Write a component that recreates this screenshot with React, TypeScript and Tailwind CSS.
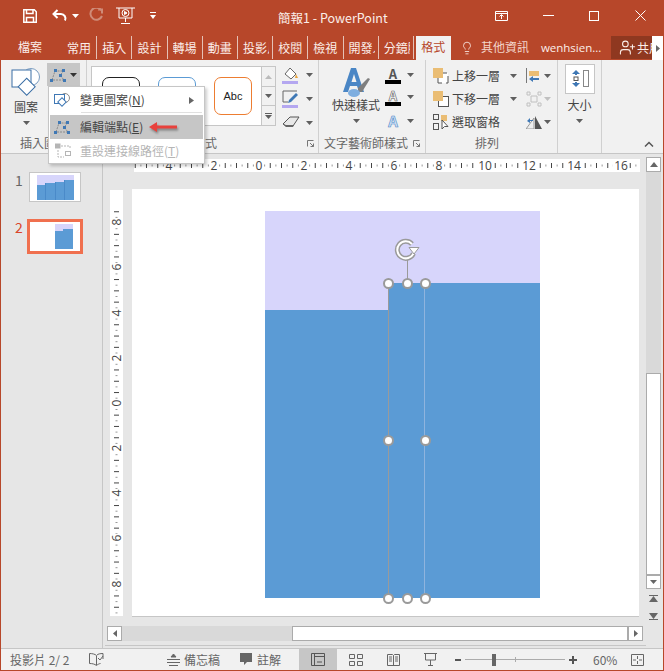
import { Lightbulb, UserPlus } from 'lucide-react';

const FONT = '"Noto Sans CJK TC", "Open Sans", sans-serif';

const tabs = ['常用', '插入', '設計', '轉場', '動畫', '投影片放映', '校閱', '檢視', '開發人員', '分鏡腳本'];

const hRulerLabels = [
  { x: 35, t: '4' }, { x: 80, t: '2' }, { x: 125, t: '0' }, { x: 170, t: '2' }, { x: 215, t: '4' }, { x: 260, t: '6' },
  { x: 305, t: '8' }, { x: 351, t: '10' }, { x: 395, t: '12' }, { x: 440, t: '14' }, { x: 487, t: '16' },
];
const vRulerLabels = [
  { y: 32, t: '8' }, { y: 77, t: '6' }, { y: 123, t: '4' }, { y: 168, t: '2' }, { y: 213, t: '0' },
  { y: 258, t: '2' }, { y: 303, t: '4' }, { y: 348, t: '6' }, { y: 394, t: '8' },
];

function Caret({ color = '#5f5f5f', className = '' }: { color?: string; className?: string }) {
  return (
    <svg width="7" height="4" viewBox="0 0 7 4" className={`shrink-0 ${className}`}>
      <path d="M0 0h7L3.5 4z" fill={color} />
    </svg>
  );
}

function EditPointsIcon() {
  return (
    <svg width="17" height="16" viewBox="0 0 17 16">
      <path d="M2 13L5 4h8M14 4L10 8l4 5H2" fill="none" stroke="#8a8a8a" strokeDasharray="2 1" />
      <g fill="#3f78b5">
        <rect x="0" y="12" width="3" height="3" />
        <rect x="4" y="2" width="3" height="3" />
        <rect x="12" y="2" width="3" height="3" />
        <rect x="9" y="7" width="3" height="3" />
        <rect x="13" y="12" width="3" height="3" />
      </g>
    </svg>
  );
}

function AbcCard({ border }: { border: string }) {
  return (
    <div className={`flex h-[38px] w-[38px] items-center justify-center rounded-[7px] border bg-white text-[11px] text-[#222] ${border}`} style={{ fontFamily: '"Liberation Sans", sans-serif' }}>
      Abc
    </div>
  );
}

function Handle({ x, y }: { x: number; y: number }) {
  return (
    <span
      className="absolute h-[11px] w-[11px] rounded-full border-2 border-[#9a9a9a] bg-white"
      style={{ left: x - 5.5, top: y - 5.5 }}
    />
  );
}

function HRuler() {
  const ticks = [];
  for (let i = 0; i < 90; i++) {
    const x = 125 - 45 * 2 - 33.75 + (i * 45) / 8;
    const kind = i % 2 === 0 ? 5 : 2;
    ticks.push(<line key={i} x1={x} x2={x} y1={6.5 - kind / 2} y2={6.5 + kind / 2} stroke={kind === 2 ? '#999' : '#444'} />);
  }
  return (
    <svg width="506" height="13" className="bg-white">
      {ticks}
      {hRulerLabels.map((l) => (
        <g key={l.x}>
          <rect x={l.x - (l.t.length > 1 ? 8 : 4)} y="0" width={l.t.length > 1 ? 16 : 8} height="13" fill="#fff" />
          <text x={l.x} y="11" textAnchor="middle" fontSize="12" fill="#444" fontFamily="Open Sans">{l.t}</text>
        </g>
      ))}
    </svg>
  );
}

function VRuler() {
  const ticks = [];
  for (let i = 0; i < 76; i++) {
    const y = 213 - 191.25 + (i * 45.2) / 8;
    const k = i % 2 === 0 ? 5 : 2;
    ticks.push(<line key={i} y1={y} y2={y} x1={6.5 - k / 2} x2={6.5 + k / 2} stroke={k === 2 ? '#999' : '#444'} />);
  }
  return (
    <svg width="13" height="426" className="shrink-0 bg-white">
      {ticks}
      {vRulerLabels.map((l) => (
        <g key={l.y}>
          <rect x="0" y={l.y - 4} width="13" height="8" fill="#fff" />
          <text x="6.5" y={l.y} textAnchor="middle" dominantBaseline="central" fontSize="12" fill="#444" fontFamily="Open Sans" transform={`rotate(-90 6.5 ${l.y})`}>{l.t}</text>
        </g>
      ))}
    </svg>
  );
}

export default function App() {
  return (
    <div className="relative flex h-[671px] w-[664px] flex-col overflow-hidden border-x border-b border-[#b7472a] bg-[#e6e6e6] text-[12px] text-[#444]" style={{ fontFamily: FONT }}>
      {/* title bar */}
      <div className="flex h-[34px] shrink-0 items-center bg-[#b7472a] pb-[3px] pl-[22px] text-white">
        <svg width="14" height="14" viewBox="0 0 14 14" fill="none" stroke="#fff" strokeWidth="1.5">
          <path d="M.8.8h10.500l2 2v10.400H.8z" />
          <path d="M3.500 1v3.500h6.500V1M3.500 13V8.500h7V13" />
        </svg>
        <svg width="16" height="14" viewBox="0 0 16 14" fill="none" stroke="#fff" strokeWidth="2" className="ml-[15px]">
          <path d="M5.500 1L1.500 5l4 4M2 5h7a4.500 4.500 0 0 1 4 6.500" />
        </svg>
        <Caret color="#fff" className="ml-[4px]" />
        <svg width="14" height="15" viewBox="0 0 14 15" fill="none" stroke="#cf8b78" strokeWidth="2" className="ml-[10px]">
          <path d="M9 1.500h4v4M12.500 2.500A6 6 0 1 0 13 8" />
        </svg>
        <svg width="19" height="18" viewBox="0 0 19 18" fill="none" stroke="#fff" className="ml-[13px]">
          <path d="M0 1h19M3 1v10h13V1M9.500 11v4M5 16.500h9" />
          <circle cx="9.500" cy="6" r="3.500" />
          <path d="M8.500 4.500v3l2.500-1.500z" fill="#fff" />
        </svg>
        <svg width="6" height="7" viewBox="0 0 6 7" fill="#fff" className="ml-[15px]">
          <path d="M0 0h6v1H0zM0 3h6L3 7z" />
        </svg>
        <span className="ml-[122px] mt-[5px] w-[217px] text-[12.5px] leading-none text-[#fbeee9]">簡報1 - PowerPoint</span>
        <svg width="13" height="10" viewBox="0 0 13 10" fill="none" stroke="#fff">
          <path d="M.5.500h12v9H.5zM.5 2.500h12M6.500 8V4M4.500 5.500l2-2 2 2" />
        </svg>
        <span className="ml-[35px] h-px w-[11px] bg-white" />
        <span className="ml-[35px] h-[10px] w-[10px] border border-white" />
        <svg width="11" height="11" viewBox="0 0 11 11" stroke="#fff" className="ml-[36px]">
          <path d="M.500.500l10 10M10.500.500l-10 10" />
        </svg>
      </div>

      {/* tabs */}
      <div className="flex h-[26px] shrink-0 items-end whitespace-nowrap bg-[#b7472a] text-[#fbeee9]">
        <span className="mb-[4px] w-[61px] shrink-0 pl-[17px]">檔案</span>
        <div className="mb-[1px] flex h-[23px] items-center">
          {tabs.map((t) => (
            <span key={t} className="flex h-full w-[35.2px] items-center border-r border-[#e5c1b6] pl-[5px]">
              <span className="w-[26px] overflow-hidden">{t}</span>
            </span>
          ))}
        </div>
        <span className="ml-[2px] flex h-[24px] w-[35px] shrink-0 items-center justify-center bg-[#f1f1f1] pb-[2px] text-[#b7472a]">格式</span>
        <Lightbulb size={14} strokeWidth={1.4} className="mb-[5px] ml-[9px] shrink-0" />
        <span className="mb-[4px] ml-[7px] text-[#f3d5cb]">其他資訊</span>
        <span className="mb-[4px] ml-[12px] w-[72px] text-[11.5px]" style={{ fontFamily: '"Open Sans", sans-serif' }}>wenhsien...</span>
        <div className="mb-[1px] flex h-[23px] w-[41px] shrink-0 items-center gap-[1px] overflow-hidden bg-[#8f3820] pl-[8px]">
          <UserPlus size={17} strokeWidth={1.5} className="shrink-0" />
          <span>共用</span>
        </div>
        <div className="flex h-[24px] w-[11px] shrink-0 items-center justify-center bg-white">
          <svg width="4" height="7" viewBox="0 0 4 7"><path d="M0 0l4 3.500L0 7z" fill="#666" /></svg>
        </div>
      </div>

      {/* ribbon */}
      <div className="flex h-[94px] shrink-0 border-b border-[#c6c6c6] bg-[#f1f1f1] text-[#444]">
        <div className="flex w-[86px] shrink-0 flex-col border-r border-[#d0d0d0]">
          <div className="flex h-[74px] pl-[5px] pt-[3px]">
            <div className="flex w-[40px] flex-col items-center pt-[4px]">
              <svg width="30" height="31" viewBox="0 0 30 31" fill="none" stroke="#3a6ea5">
                <circle cx="20" cy="10" r="8.500" stroke="#7a9cc0" fill="#fff" />
                <rect x="1" y="3" width="19" height="17" fill="#fff" />
                <rect x="10" y="13" width="12" height="12" transform="rotate(45 15 19)" fill="#fff" />
              </svg>
              <span className="mt-[1px] leading-[16px]">圖案</span>
              <Caret className="mt-[6px]" />
            </div>
            <div className="ml-[1px] flex h-[23px] w-[33px] items-center justify-center gap-[3px] bg-[#c6c6c6]">
              <EditPointsIcon />
              <Caret color="#333" />
            </div>
          </div>
          <span className="pl-[19px] text-[#666]">插入圖案</span>
        </div>

        <div className="flex w-[232px] shrink-0 flex-col border-r border-[#d0d0d0]">
          <div className="flex h-[74px] pl-[4px] pt-[6px]">
            <div className="flex h-[60px] w-[185px] border border-[#c6c6c6] bg-white">
              <div className="flex flex-1 items-center gap-[18px] pl-[10px]">
                <AbcCard border="border-[#222]" />
                <AbcCard border="border-[#5b9bd5]" />
                <AbcCard border="border-[#ed7d31]" />
              </div>
              <div className="flex w-[14px] flex-col border-l border-[#c6c6c6] bg-[#f1f1f1]">
                <div className="flex h-[20px] items-center justify-center border-b border-[#c6c6c6]">
                  <svg width="7" height="4" viewBox="0 0 7 4"><path d="M0 4h7L3.500 0z" fill="#bbb" /></svg>
                </div>
                <div className="flex h-[19px] items-center justify-center border-b border-[#c6c6c6]"><Caret /></div>
                <div className="flex flex-1 flex-col items-center justify-center gap-[1px]">
                  <span className="h-px w-[7px] bg-[#5f5f5f]" />
                  <Caret />
                </div>
              </div>
            </div>
            <div className="ml-[6px] mt-[-1px] flex flex-col gap-[5px]">
              <div className="flex h-[19px] items-center gap-[6px]">
                <svg width="18" height="18" viewBox="0 0 18 18">
                  <path d="M8 2l6 6-5 5-6-5z" fill="#fff" stroke="#666" />
                  <path d="M14 8l2 4h-3z" fill="#e8a33c" />
                  <rect x="0" y="15" width="16" height="3" fill="#b4a7f0" />
                </svg>
                <Caret />
              </div>
              <div className="flex h-[19px] items-center gap-[6px]">
                <svg width="18" height="18" viewBox="0 0 18 18" fill="none">
                  <path d="M15 1H1v11h5" stroke="#666" />
                  <path d="M7 10l7-7 2 2-7 7-3 1z" fill="#3f78b5" />
                  <rect x="0" y="15" width="16" height="3" fill="#b4a7f0" />
                </svg>
                <Caret />
              </div>
              <div className="flex h-[19px] items-center gap-[6px]">
                <svg width="18" height="16" viewBox="0 0 18 16">
                  <path d="M1 9l7-7h9l-6 9H4z" fill="#e8e8e8" stroke="#555" />
                  <path d="M1 9l3 3h7l1-2H4z" fill="#666" />
                </svg>
                <Caret />
              </div>
            </div>
          </div>
          <div className="flex items-center">
            <span className="ml-[82px] flex-1 text-[#666]">圖案樣式</span>
            <svg width="7" height="7" viewBox="0 0 7 7" fill="none" stroke="#777" className="mr-[4px]"><path d="M.5 6.500V.5h6M3 3l3.500 3.500M6.500 3.500v3h-3" /></svg>
          </div>
        </div>

        <div className="flex w-[107px] shrink-0 flex-col border-r border-[#d0d0d0]">
          <div className="flex h-[74px] pt-[6px]">
            <div className="flex w-[66px] shrink-0 flex-col items-center pl-[8px]">
              <svg width="30" height="32" viewBox="0 0 30 32">
                <path d="M2 26L10 2h5l8 24h-5l-2-6H9l-2 6zM10.500 16h5L13 8z" fill="#4a86c5" />
                <path d="M17 22l10-10 2 1-8 13-4 0z" fill="#7f7f7f" />
                <ellipse cx="13" cy="27" rx="6" ry="4" fill="#7eaee0" />
              </svg>
              <span className="mt-[-1px] whitespace-nowrap leading-[16px]">快速樣式</span>
              <Caret className="mt-[6px]" />
            </div>
            <div className="flex flex-col gap-[2px] pt-[1px]">
              <div className="flex h-[20px] items-start gap-[6px]">
                <div className="flex w-[16px] flex-col items-center leading-[13px]">
                  <span className="text-[13px] font-bold text-[#555]">A</span>
                  <span className="h-[4px] w-[16px] bg-black" />
                </div>
                <Caret className="mt-[6px]" />
              </div>
              <div className="flex h-[20px] items-start gap-[6px]">
                <div className="flex w-[16px] flex-col items-center leading-[13px]">
                  <span className="text-[13px] font-bold text-white [-webkit-text-stroke:0.6px_#555]">A</span>
                  <span className="h-[4px] w-[16px] bg-black" />
                </div>
                <Caret className="mt-[6px]" />
              </div>
              <div className="flex h-[20px] items-center gap-[6px]">
                <span className="w-[16px] text-center text-[15px] font-bold text-[#cfe2f6] [-webkit-text-stroke:0.6px_#4a86c5]">A</span>
                <Caret />
              </div>
            </div>
          </div>
          <div className="flex items-center">
            <span className="flex-1 whitespace-nowrap pl-[5px] text-[#666]">文字藝術師樣式</span>
            <svg width="7" height="7" viewBox="0 0 7 7" fill="none" stroke="#777" className="mr-[5px]"><path d="M.5 6.500V.5h6M3 3l3.500 3.500M6.500 3.500v3h-3" /></svg>
          </div>
        </div>

        <div className="flex w-[132px] shrink-0 flex-col border-r border-[#d0d0d0]">
          <div className="flex h-[74px] pl-[7px] pt-[4px]">
            <div className="flex w-[93px] shrink-0 flex-col">
              {['上移一層', '下移一層', '選取窗格'].map((t, i) => (
                <div key={t} className="flex h-[23px] items-center">
                  <svg width="16" height="16" viewBox="0 0 16 16" className="shrink-0">
                    {i === 0 && <path d="M5 5h10v10H5z" fill="#fff" stroke="#555" strokeDasharray="9 4" />}
                    {i === 1 && <rect x="5.500" y="5.500" width="10" height="10" fill="#fff" stroke="#555" />}
                    {i < 2 && <rect x="0" y="0" width="10" height="10" fill="#eabd74" />}
                    {i === 2 && (
                      <g fill="none" stroke="#555">
                        <rect x=".5" y=".5" width="5" height="5" />
                        <rect x=".5" y="9.500" width="5" height="6" />
                        <rect x="8" y="1" width="6" height="6" fill="#eabd74" stroke="none" />
                        <path d="M9 6v9l2.500-2.500H15z" fill="#fff" />
                      </g>
                    )}
                  </svg>
                  <span className="ml-[3px] whitespace-nowrap">{t}</span>
                  {i < 2 && <Caret className="ml-[10px]" />}
                </div>
              ))}
            </div>
            <div className="flex flex-col">
              <div className="flex h-[23px] items-center gap-[3px]">
                <svg width="15" height="16" viewBox="0 0 15 16">
                  <path d="M.5 0v15" stroke="#777" />
                  <rect x="3" y="3" width="10" height="5" fill="#eabd74" />
                  <path d="M3 11l4-3v2h6v2H7v2z" fill="#3f78b5" />
                </svg>
                <Caret />
              </div>
              <div className="flex h-[23px] items-center gap-[2px]">
                <svg width="16" height="16" viewBox="0 0 16 16" fill="none" stroke="#c0c0c0">
                  <path d="M1 1h3v3H1zM12 1h3v3h-3zM1 12h3v3H1zM12 12h3v3h-3zM5 5h6v6H5z" />
                </svg>
                <Caret color="#c0c0c0" />
              </div>
              <div className="flex h-[23px] items-center gap-[2px]">
                <svg width="16" height="14" viewBox="0 0 16 14">
                  <path d="M8 3v11H0z" fill="#eee" stroke="#999" />
                  <path d="M9 1l7 13H9z" fill="#555" />
                  <path d="M1 6l3-3v2h3v1H4v2z" fill="#3f78b5" />
                </svg>
                <Caret />
              </div>
            </div>
          </div>
          <span className="pl-[49px] text-[#666]">排列</span>
        </div>

        <div className="flex w-[44px] shrink-0 flex-col border-r border-[#d0d0d0]">
          <div className="flex h-[74px] flex-col items-center pt-[4px]">
            <div className="flex h-[30px] w-[30px] items-center justify-center border border-[#c6c6c6] bg-white">
              <svg width="18" height="18" viewBox="0 0 18 18">
                <rect x="12.500" y=".5" width="5" height="16" fill="none" stroke="#888" />
                <rect x="3" y="7" width="4" height="3.500" fill="none" stroke="#555" />
                <path d="M1 4l4-4 4 4H6v1H4V4zM1 13l4 4 4-4H6v-1H4v1z" fill="#3f78b5" />
              </svg>
            </div>
            <span className="mt-[3px] leading-[16px]">大小</span>
            <Caret className="mt-[6px]" />
          </div>
        </div>

        <div className="flex flex-1 items-end justify-end pb-[6px] pr-[9px]">
          <svg width="10" height="6" viewBox="0 0 10 6" fill="none" stroke="#555" strokeWidth="1.5"><path d="M1 5.500l4-4 4 4" /></svg>
        </div>
      </div>

      {/* work area */}
      <div className="flex min-h-0 flex-1">
        <div className="flex w-[102px] shrink-0 flex-col border-r border-[#c6c6c6] pt-[18px]">
          <div className="flex items-start pl-[14px]">
            <span className="w-[14px] text-[14px] leading-[16px] text-[#666]">1</span>
            <div className="flex h-[30px] w-[52px] justify-center border border-[#c6c6c6] bg-white pt-[2px]">
              <div className="flex h-[25px] w-[37px] items-end bg-[#d7d5fb]">
                <span className="h-[15px] flex-1 bg-[#5b9bd5]" />
                <span className="h-[17px] flex-1 border-l border-[#4a8ac9] bg-[#5b9bd5]" />
                <span className="h-[18px] flex-1 border-l border-[#4a8ac9] bg-[#5b9bd5]" />
                <span className="h-[20px] flex-1 border-l border-[#4a8ac9] bg-[#5b9bd5]" />
              </div>
            </div>
          </div>
          <div className="mt-[17px] flex items-start pl-[14px]">
            <span className="w-[12px] text-[14px] leading-[16px] text-[#d9452a]">2</span>
            <div className="flex h-[35px] w-[56px] justify-end border-[3px] border-[#f0704f] bg-white pr-[7px] pt-[2px]">
              <div className="flex h-[25px] w-[18px] items-end bg-[#d7d5fb]">
                <span className="h-[18px] w-[8px] bg-[#5b9bd5]" />
                <span className="h-[20px] w-[10px] bg-[#5b9bd5]" />
              </div>
            </div>
          </div>
        </div>

        <div className="flex w-[543px] shrink-0 flex-col">
          <div className="ml-[31px] mt-[5px] leading-[0]"><HRuler /></div>
          <div className="mt-[17px] flex">
            <div className="ml-[7px] mt-px"><VRuler /></div>
            <div className="relative ml-[9px] h-[428px] w-[507px] border-b border-[#c6c6c6] bg-white">
              <div className="absolute left-[133px] top-[22px] h-[387px] w-[275px] bg-[#d7d5fb]" />
              <div className="absolute left-[133px] top-[121px] h-[288px] w-[123px] bg-[#5b9bd5]" />
              <div className="absolute left-[256px] top-[94px] h-[315px] w-[152px] bg-[#5b9bd5]" />
              <div className="absolute left-[256px] top-[94px] h-[315px] w-[37px] border-x border-l-[#9a9a9a] border-r-[#8fb4de]" />
              <span className="absolute left-[275px] top-[69px] h-[25px] w-px bg-[#9a9a9a]" />
              <svg width="30" height="26" viewBox="0 0 30 26" fill="none" className="absolute left-[262px] top-[49px]">
                <path d="M19.500 15.500a8.500 8.500 0 1 1-1.500-9.500" stroke="#9a9a9a" strokeWidth="5" />
                <path d="M19.500 15.500a8.500 8.500 0 1 1-1.500-9.500" stroke="#fff" strokeWidth="2" />
                <path d="M15 9.500h10l-5 6.500z" fill="#fff" stroke="#9a9a9a" />
              </svg>
              <Handle x={256} y={94} />
              <Handle x={275} y={94} />
              <Handle x={293} y={94} />
              <Handle x={256} y={251} />
              <Handle x={293} y={251} />
              <Handle x={256} y={409} />
              <Handle x={275} y={409} />
              <Handle x={293} y={409} />
            </div>
          </div>
          <div className="ml-[4px] mt-[9px] flex h-[15px] w-[536px] bg-[#d9d9d9]">
            <div className="flex w-[15px] items-center justify-center border border-[#ababab] bg-white">
              <svg width="4" height="7" viewBox="0 0 4 7"><path d="M4 0L0 3.500 4 7z" fill="#666" /></svg>
            </div>
            <div className="ml-[170px] w-[336px] border border-[#ababab] bg-white" />
            <div className="flex w-[15px] items-center justify-center border border-[#ababab] bg-white">
              <svg width="4" height="7" viewBox="0 0 4 7"><path d="M0 0l4 3.500L0 7z" fill="#666" /></svg>
            </div>
          </div>
          <div className="ml-[2px] mt-[4px] h-px bg-[#c6c6c6]" />
        </div>

        <div className="flex w-[15px] shrink-0 flex-col pt-[3px]">
          <div className="flex h-[15px] items-center justify-center border border-[#ababab] bg-white">
            <svg width="8" height="5" viewBox="0 0 8 5"><path d="M0 5h8L4 0z" fill="#666" /></svg>
          </div>
          <div className="h-[201px] bg-[#d9d9d9]" />
          <div className="h-[202px] border border-[#ababab] bg-white" />
          <div className="flex h-[14px] items-center justify-center border border-[#ababab] bg-white">
            <Caret color="#666" />
          </div>
          <div className="mt-[5px] flex h-[9px] items-center justify-center">
            <svg width="9" height="9" viewBox="0 0 9 9" fill="#666"><path d="M0 1h9v1H0zM4.500 2L9 8H0z" /></svg>
          </div>
          <div className="mt-[9px] flex h-[9px] items-center justify-center">
            <svg width="9" height="9" viewBox="0 0 9 9" fill="#666"><path d="M0 1h9L4.500 7zM0 7h9v1H0z" /></svg>
          </div>
        </div>
      </div>

      {/* status bar */}
      <div className="flex h-[22px] shrink-0 items-center border-t border-[#c6c6c6] bg-[#f1f1f1] text-[#666]">
        <span className="ml-[9px] w-[79px] whitespace-nowrap">投影片 2/ 2</span>
        <svg width="15" height="13" viewBox="0 0 15 13" fill="none" stroke="#666">
          <path d="M7.500 2.500C6 1 3 .5.500.5v10c3 0 5 .5 7 2 1-1 3-2 4-2M7.500 2.500V12M8 2c1-1 3-1.500 6-1.500V6" />
          <path d="M9 5l2 2 3-4" />
        </svg>
        <svg width="13" height="12" viewBox="0 0 13 12" stroke="#666" className="ml-[63px]">
          <path d="M6.500 0L4 3h5zM0 5.500h13M0 8.500h13M2 11.500h9" fill="#666" />
        </svg>
        <span className="ml-[4px] w-[56px]">備忘稿</span>
        <svg width="13" height="13" viewBox="0 0 13 13"><path d="M0 0h12v9H7l-3 3V9H0z" fill="#666" /></svg>
        <span className="ml-[4px] w-[42px]">註解</span>
        <div className="flex h-full w-[38px] items-center justify-center bg-[#c6c6c6]">
          <svg width="14" height="13" viewBox="0 0 14 13" fill="none" stroke="#555"><path d="M.5.500h13v12H.5zM3.500.500v12M3.500 3.500h10M6 9h5" /></svg>
        </div>
        <svg width="14" height="12" viewBox="0 0 14 12" fill="none" stroke="#666" className="ml-[12px]">
          <path d="M.5.500h5v4h-5zM8.500.500h5v4h-5zM.5 7.500h5v4h-5zM8.500 7.500h5v4h-5z" />
        </svg>
        <svg width="13" height="12" viewBox="0 0 13 12" fill="none" stroke="#666" className="ml-[24px]">
          <path d="M.5.500h5L6.500 1.500 7.500.500h5v11h-12zM6.500 1.500v10M2 3h3M2 5h3M2 7h3M8 3h3M8 5h3M8 7h3" />
        </svg>
        <svg width="13" height="13" viewBox="0 0 13 13" fill="none" stroke="#666" className="ml-[24px]">
          <path d="M0 .5h13M1.500 1v6h10V1M6.500 7v5M4 12.500h5" />
        </svg>
        <span className="ml-[18px] h-[2px] w-[6px] bg-[#555]" />
        <div className="relative ml-[4px] flex h-[12px] w-[100px] items-center">
          <span className="h-px w-full bg-[#ababab]" />
          <span className="absolute left-[50px] h-[5px] w-px bg-[#ababab]" />
          <span className="absolute left-[27px] h-[12px] w-[4px] bg-[#666]" />
        </div>
        <svg width="8" height="8" viewBox="0 0 8 8" fill="#555" className="ml-[4px]"><path d="M3 0h2v3h3v2H5v3H3V5H0V3h3z" /></svg>
        <span className="ml-[16px] w-[38px]">60%</span>
        <svg width="13" height="12" viewBox="0 0 13 12" fill="none" stroke="#666">
          <path d="M.5.500h12v11H.5zM6.500 2v3M6.500 7v3M2 6h3M8 6h3" />
        </svg>
      </div>

      {/* change shape menu */}
      <div className="absolute left-[47px] top-[86px] w-[157px] border border-[#c6c6c6] bg-white p-px text-[12px] text-[#444] shadow-[2px_2px_3px_rgba(0,0,0,0.2)]">
        <div className="flex h-[24px] items-center pl-[4px]">
          <svg width="17" height="15" viewBox="0 0 17 15" fill="none" stroke="#3f78b5">
            <circle cx="11" cy="5" r="4.500" stroke="#888" />
            <rect x=".5" y="1.500" width="10" height="9" fill="#fff" />
            <rect x="5" y="6" width="6" height="6" transform="rotate(45 8 9)" fill="#fff" />
          </svg>
          <span className="ml-[9px] flex-1 whitespace-nowrap">變更圖案(<span className="underline">N</span>)</span>
          <svg width="5" height="7" viewBox="0 0 5 7" className="mr-[9px]"><path d="M0 0l5 3.500L0 7z" fill="#666" /></svg>
        </div>
        <div className="ml-[31px] mr-px h-px bg-[#e0e0e0]" />
        <div className="mt-[2px] flex h-[24px] items-center bg-[#c6c6c6] pl-[4px]">
          <EditPointsIcon />
          <span className="ml-[9px] whitespace-nowrap">編輯端點(<span className="underline">E</span>)</span>
          <svg width="29" height="12" viewBox="0 0 29 12" className="ml-[6px] drop-shadow-[1px_2px_1px_rgba(0,0,0,0.35)]">
            <path d="M0 6l8-5v3.500h20v3H8V11z" fill="#e8413c" />
          </svg>
        </div>
        <div className="flex h-[23px] items-center pl-[5px] text-[#b5b5b5]">
          <svg width="16" height="15" viewBox="0 0 16 15" fill="none" stroke="#b5b5b5">
            <rect x="0" y="1" width="5" height="4" fill="#b5b5b5" />
            <rect x="10.500" y="8.500" width="5" height="4" />
            <path d="M6 3h9v3M3 7v7h6" strokeDasharray="2 1" />
          </svg>
          <span className="ml-[9px] whitespace-nowrap">重設連接線路徑(<span className="underline">T</span>)</span>
        </div>
      </div>
    </div>
  );
}
